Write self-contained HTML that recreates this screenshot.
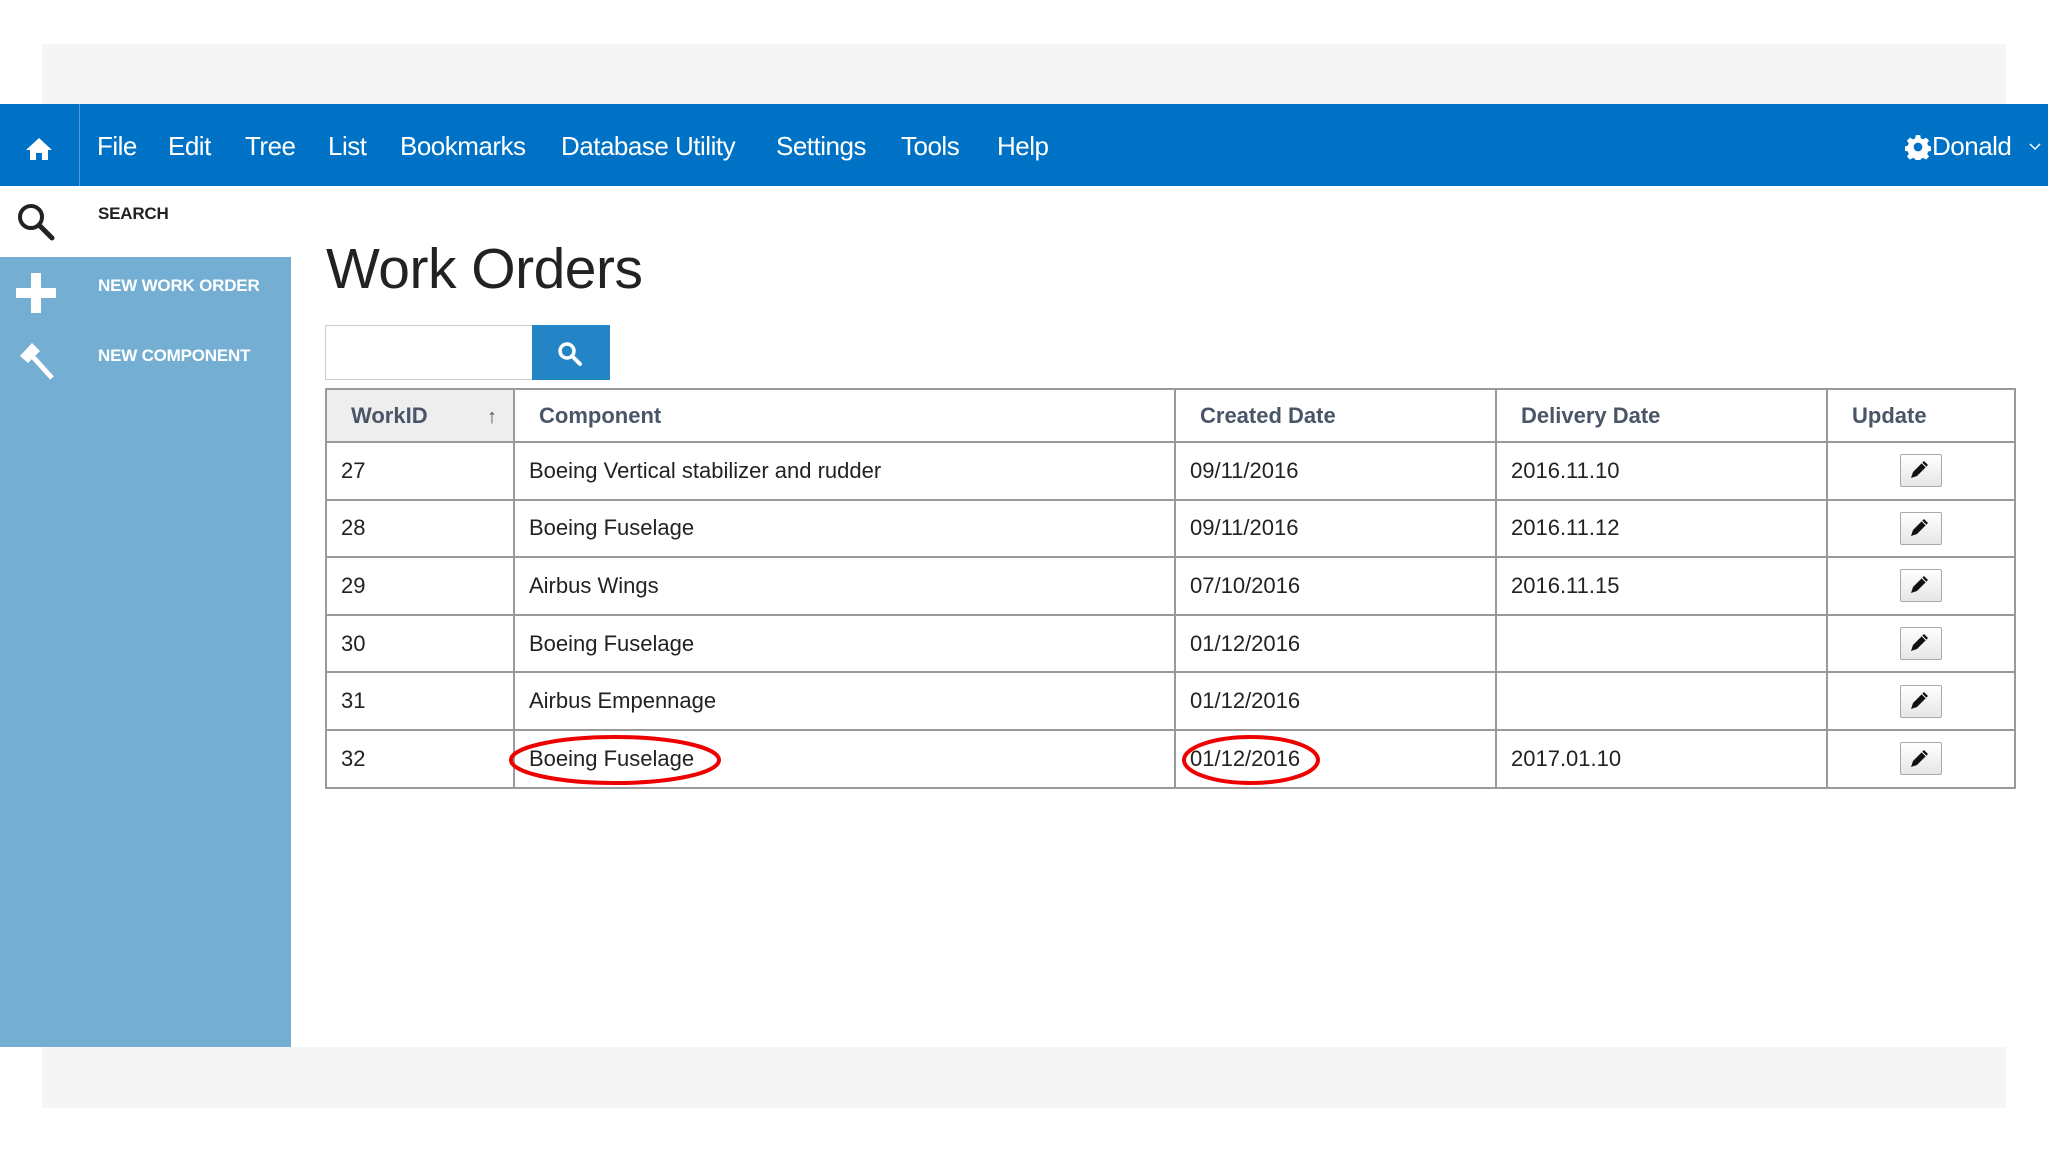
<!DOCTYPE html>
<html><head><meta charset="utf-8"><style>
*{margin:0;padding:0;box-sizing:border-box}
body{width:2048px;height:1152px;background:#fff;position:relative;overflow:hidden;font-family:"Liberation Sans",sans-serif}
.a{position:absolute}
.nav{left:0;top:104px;width:2048px;height:82px;background:#0072c6}
.nav span{position:absolute;top:27px;color:#fff;font-size:26px;letter-spacing:-0.5px}
.side{left:0;top:257px;width:291px;height:790px;background:#74afd3}
.st{color:#fff;font-weight:bold;font-size:17px;letter-spacing:-0.2px}
table{position:absolute;left:325px;top:388px;border-collapse:collapse;font-size:22px;color:#222}
td,th{border:2px solid #9a9a9a;height:57.6px;text-align:left;padding:0 14px;font-weight:normal}
th{font-weight:bold;color:#4a5668;height:53px;padding-left:24px}
.pen{display:block;margin:0 auto;width:42px;height:33px;border:1px solid #aaa;border-radius:2px;background:linear-gradient(#fff,#e6e6e6)}
</style></head><body>
<div class="a" style="left:42px;top:44px;width:1964px;height:60px;background:#f5f5f5"></div>
<div class="a" style="left:42px;top:1047px;width:1964px;height:61px;background:#f5f5f5"></div>
<div class="a nav">
<svg class="a" style="left:25px;top:33px" width="28" height="24" viewBox="0 0 28 24"><path d="M14 1 L27 13 L23 13 L23 23 L17 23 L17 16 L11 16 L11 23 L5 23 L5 13 L1 13 Z" fill="#fff"/></svg>
<div class="a" style="left:79px;top:0;width:1px;height:82px;background:#4f9ad8"></div>
<span style="left:97px">File</span><span style="left:168px">Edit</span><span style="left:245px">Tree</span><span style="left:328px">List</span><span style="left:400px">Bookmarks</span><span style="left:561px">Database Utility</span><span style="left:776px">Settings</span><span style="left:901px">Tools</span><span style="left:997px">Help</span>
<svg class="a" style="left:1905px;top:30px" width="26" height="26" viewBox="0 0 24 24"><path fill="#fff" d="M10 1h4l.6 3 2.2 1 2.6-1.7 2.8 2.8-1.7 2.6 1 2.2 3 .6v4l-3 .6-1 2.2 1.7 2.6-2.8 2.8-2.6-1.7-2.2 1-.6 3h-4l-.6-3-2.2-1-2.6 1.7-2.8-2.8 1.700-2.6-1-2.2-3-.6v-4l3-.6 1-2.2L1.8 6.1 4.6 3.3l2.6 1.7 2.2-1z"/><circle cx="12" cy="12" r="4" fill="#0072c6"/></svg>
<span style="left:1932px">Donald</span>
<svg class="a" style="left:2029px;top:39px" width="12" height="8"><path d="M1 1l5 5 5-5" stroke="#fff" stroke-width="1.5" fill="none"/></svg>
</div>
<svg class="a" style="left:14px;top:200px" width="44" height="44" viewBox="0 0 44 44"><circle cx="17" cy="17" r="11" stroke="#222" stroke-width="4" fill="none"/><path d="M25 25l13 13" stroke="#222" stroke-width="5" stroke-linecap="round"/></svg>
<div class="a st" style="left:98px;top:204px;color:#222">SEARCH</div>
<div class="a side"></div>
<svg class="a" style="left:16px;top:273px" width="40" height="40"><path d="M15 0h10v15h15v10H25v15H15V25H0V15h15z" fill="#fff"/></svg>
<svg class="a" style="left:14px;top:340px" width="44" height="44" viewBox="0 0 44 44"><path d="M6 16L18 3 26 11 14 23Z" fill="#fff"/><path d="M19 17L38 38" stroke="#fff" stroke-width="5"/></svg>
<div class="a st" style="left:98px;top:276px">NEW WORK ORDER</div>
<div class="a st" style="left:98px;top:346px">NEW COMPONENT</div>
<div class="a" style="left:326px;top:236px;font-size:57px;color:#222;letter-spacing:-0.5px">Work Orders</div>
<div class="a" style="left:325px;top:325px;width:208px;height:55px;border:1px solid #ccc;background:#fff"></div>
<div class="a" style="left:532px;top:325px;width:78px;height:55px;background:#2384c6"></div>
<svg class="a" style="left:557px;top:341px" width="26" height="26" viewBox="0 0 26 26"><circle cx="10" cy="10" r="7" stroke="#fff" stroke-width="3.5" fill="none"/><path d="M15 15l8 8" stroke="#fff" stroke-width="4" stroke-linecap="round"/></svg>
<table>
<tr><th style="width:188px;background:#eee;position:relative">WorkID<span style="position:absolute;right:16px;top:16px;font-weight:normal;font-size:20px">↑</span></th><th style="width:661px;padding-left:24px">Component</th><th style="width:321px">Created Date</th><th style="width:331px">Delivery Date</th><th style="width:188px">Update</th></tr>
<tr><td>27</td><td>Boeing Vertical stabilizer and rudder</td><td>09/11/2016</td><td>2016.11.10</td><td><span class="pen"></span></td></tr>
<tr><td>28</td><td>Boeing Fuselage</td><td>09/11/2016</td><td>2016.11.12</td><td><span class="pen"></span></td></tr>
<tr><td>29</td><td>Airbus Wings</td><td>07/10/2016</td><td>2016.11.15</td><td><span class="pen"></span></td></tr>
<tr><td>30</td><td>Boeing Fuselage</td><td>01/12/2016</td><td></td><td><span class="pen"></span></td></tr>
<tr><td>31</td><td>Airbus Empennage</td><td>01/12/2016</td><td></td><td><span class="pen"></span></td></tr>
<tr><td>32</td><td>Boeing Fuselage</td><td>01/12/2016</td><td>2017.01.10</td><td><span class="pen"></span></td></tr>
</table>
<svg class="a" style="left:0;top:0;pointer-events:none" width="2048" height="1152">
<g id="p"><path d="M1911 478l2-6 11-11 4 4-11 11z" fill="#111"/><path d="M1922 463l4 4" stroke="#fff" stroke-width="1"/></g>
<use href="#p" y="58"/><use href="#p" y="115"/><use href="#p" y="173"/><use href="#p" y="231"/><use href="#p" y="289"/>
<ellipse cx="615" cy="760" rx="104" ry="23" stroke="#e00" stroke-width="4" fill="none"/>
<ellipse cx="1251" cy="760" rx="67" ry="23" stroke="#e00" stroke-width="4" fill="none"/>
</svg>
</body></html>
